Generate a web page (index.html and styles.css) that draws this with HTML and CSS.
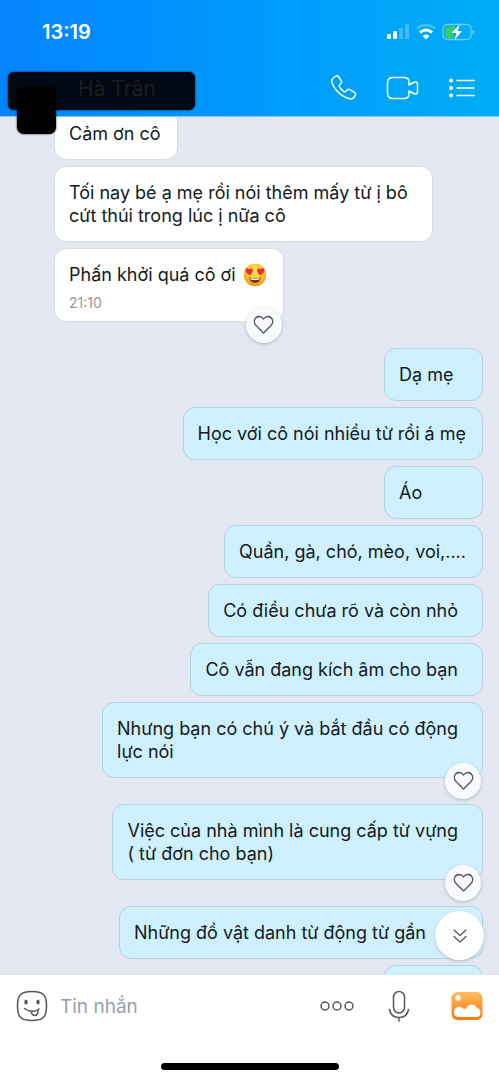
FILE: index.html
```html
<!DOCTYPE html>
<html lang="vi">
<head>
<meta charset="utf-8">
<meta name="viewport" content="width=device-width, initial-scale=1">
<title>Hà Trân</title>
<link rel="stylesheet" href="styles.css">
</head>
<body>
<div class="app">
  <header class="header">
    <div class="status">
      <span class="clock">13:19</span>
      <div class="indicators">
        <svg width="24" height="16" viewBox="0 0 24 16" fill="#fff"><rect x="1" y="10" width="4" height="5" rx="1"/><rect x="7" y="7" width="4" height="8" rx="1"/><g opacity=".25"><rect x="13" y="4" width="4" height="11" rx="1"/><rect x="19" width="4" height="15" rx="1"/></g></svg>
        <svg width="20" height="16" viewBox="0 0 20 16" fill="none"><path d="M1 4.500Q10-2.500 19 4.500" stroke="#fff" stroke-width="3" opacity=".25"/><path d="M4 8.500Q10 3.500 16 8.500" stroke="#fff" stroke-width="3"/><path d="M6.500 12Q10 9 13.500 12L10 15.500Z" fill="#fff"/></svg>
        <svg class="battery" width="33" height="18" viewBox="0 0 33 18"><rect x="1" y="1.500" width="28" height="15" rx="4" fill="none" stroke="#fff" stroke-opacity=".4" stroke-width="1.300"/><path d="M30.500 6.500q2 .5 2 2.500t-2 2.500z" fill="#fff" opacity=".4"/><path d="M5 3.500h9L9 11h3l-1 4H5q-2 0-2-2V5.500q0-2 2-2Z" fill="#32d15c"/><path d="M18 1 9.500 10h5L12.500 17 20 8h-4.500Z" fill="#fff"/></svg>
      </div>
    </div>
    <div class="titlebar">
      <h1 class="name">Hà Trân</h1>
      <nav class="actions">
        <button aria-label="Gọi thoại"><svg width="28" height="28" viewBox="0 0 28 28"><path d="M3.200 4 6 2q1.500-.6 2.500.7l2.800 4q.8 1.300-.2 2.500L9.500 11q-.8 1 0 2.100 1.700 2.600 4.200 4.200 1 .8 2 0l1.600-1.600q1.200-.9 2.500-.1l5 3q1.300 1 .7 2.300l-1.600 2.700q-1.500 1.800-4.200 1.200-8-2-13.500-8.800-3.300-3.900-4.400-8-.4-2.500 1.400-4Z"/></svg></button>
        <button aria-label="Gọi video"><svg width="34" height="26" viewBox="0 0 34 26"><path d="M7 2.500h11q5 0 5 4.500v3l3.500-2Q31.500 5.500 31.500 9v8q0 3.500-5 1L23 16v3q0 4.500-5 4.500H7q-5.500 0-5.500-5v-11q0-5 5.500-5Z"/></svg></button>
        <button aria-label="Tùy chọn"><svg width="27" height="22" viewBox="0 0 27 22"><path d="M9 3.500h17M9 11h17M9 18.500h17"/><g fill="#fff" stroke="none"><circle cx="3" cy="3.500" r="2"/><circle cx="3" cy="11" r="2"/><circle cx="3" cy="18.500" r="2"/></g></svg></button>
      </nav>
    </div>
    <div class="cover cover-name"></div>
    <div class="cover cover-avatar"></div>
  </header>

  <main class="chat">
    <div class="messages">
      <div class="bubble in">Cảm ơn cô</div>
      <div class="bubble in roomy">Tối nay bé ạ mẹ rồi nói thêm mấy từ ị bô<br>cứt thúi trong lúc ị nữa cô</div>
      <div class="bubble in liked">Phấn khởi quá cô ơi
        <svg class="emoji" role="img" aria-label="Mắt trái tim" width="24" height="24" viewBox="0 0 24 24"><defs><radialGradient id="face" cx=".5" cy=".35" r=".65"><stop offset="0" stop-color="#ffe64a"/><stop offset=".65" stop-color="#fdc12c"/><stop offset="1" stop-color="#ee921b"/></radialGradient></defs><circle cx="12" cy="12" r="11.200" fill="url(#face)"/><g fill="#ee2d3a"><path d="M7.200 12.300C4.500 11 2 9 2.500 6.700c.5-2 3-1.800 3.700-.2 1.200-1.500 3.700-1.200 3.700 1 0 1.800-1.500 3.500-2.700 4.800Z"/><path d="M16.800 12.300c2.700-1.300 5.200-3.300 4.700-5.600-.5-2-3-1.800-3.700-.2-1.200-1.500-3.700-1.200-3.700 1 0 1.800 1.500 3.500 2.700 4.800Z"/></g><path d="M6 14.300q6 2 12 0-1 5.700-6 5.700t-6-5.700Z" fill="#713716"/><path d="M7 15q5 1.500 10 0l-.7 1.500q-4.300 1-8.600 0Z" fill="#fff"/></svg>
        <time>21:10</time>
        <button class="like" aria-label="Thích"><svg width="21" height="20" viewBox="0 0 21 20"><path d="M10.500 18 3 10.500C-.5 6.500 2 1.500 6 1.500q3 0 4.500 2.500Q12 1.500 15 1.500c4 0 6.500 5 3 9Z"/></svg></button>
      </div>
      <div class="bubble out">Dạ mẹ</div>
      <div class="bubble out">Học với cô nói nhiều từ rồi á mẹ</div>
      <div class="bubble out">Áo</div>
      <div class="bubble out">Quần, gà, chó, mèo, voi,....</div>
      <div class="bubble out roomy">Có điều chưa rõ và còn nhỏ</div>
      <div class="bubble out roomy">Cô vẫn đang kích âm cho bạn</div>
      <div class="bubble out roomy liked">Nhưng bạn có chú ý và bắt đầu có động<br>lực nói
        <button class="like" aria-label="Thích"><svg width="21" height="20" viewBox="0 0 21 20"><path d="M10.500 18 3 10.500C-.5 6.500 2 1.500 6 1.500q3 0 4.500 2.500Q12 1.500 15 1.500c4 0 6.500 5 3 9Z"/></svg></button>
      </div>
      <div class="bubble out roomy liked">Việc của nhà mình là cung cấp từ vựng<br>( từ đơn cho bạn)
        <button class="like" aria-label="Thích"><svg width="21" height="20" viewBox="0 0 21 20"><path d="M10.500 18 3 10.500C-.5 6.500 2 1.500 6 1.500q3 0 4.500 2.500Q12 1.500 15 1.500c4 0 6.500 5 3 9Z"/></svg></button>
      </div>
      <div class="bubble out wide">Những đồ vật danh từ động từ gần</div>
      <div class="bubble out"></div>
    </div>
    <button class="jump" aria-label="Xuống cuối"><svg width="16" height="16" viewBox="0 0 16 16"><path d="m2 2 6 5.500L14 2M2 8.500 8 14l6-5.500"/></svg></button>
  </main>

  <footer class="footer">
    <form class="composer">
      <button type="button" aria-label="Nhãn dán"><svg width="32" height="32" viewBox="0 0 32 32"><path d="M16 1.500c11 0 14.500 3 14.500 14.500S27 30.500 16 30.500 1.500 27.500 1.500 16 5 1.500 16 1.500Z"/><path d="M8.500 18.500q7 5.500 14.500.5M15.500 21.500q0 4 3.500 4 3.500-.2 3-6"/><g fill="#55585b" stroke="none"><ellipse cx="10" cy="12" rx="1.700" ry="2.600"/><ellipse cx="22" cy="12" rx="1.700" ry="2.600"/></g></svg></button>
      <input class="text" type="text" placeholder="Tin nhắn" aria-label="Tin nhắn">
      <button type="button" aria-label="Thêm"><svg width="36" height="12" viewBox="0 0 36 12"><circle cx="6" cy="6" r="4"/><circle cx="18" cy="6" r="4"/><circle cx="30" cy="6" r="4"/></svg></button>
      <button type="button" class="mic" aria-label="Ghi âm"><svg width="22" height="32" viewBox="0 0 22 32"><rect x="5.500" y="1.500" width="11" height="21.500" rx="5.500"/><path d="M1.500 19.500q1.500 8 9.500 8t9.500-8M11 27.500V31"/></svg></button>
      <button type="button" aria-label="Ảnh"><svg width="32" height="30" viewBox="0 0 32 30"><defs><linearGradient id="photo" x2="0" y2="1"><stop stop-color="#ffbd5f"/><stop offset="1" stop-color="#ff7414"/></linearGradient></defs><rect x=".5" y="1" width="31" height="28" rx="6" fill="url(#photo)" stroke="none"/><circle cx="7" cy="7" r="2.700" fill="#fff" stroke="none"/><path d="M3 22c0-4 3-7 6.500-6 2 .7 2.500 2 4 2 2.500 0 2.500-4.300 7.500-4.300 3.500 0 4.500 2.800 5.500 3.300 1.500.7 3 1.700 3 4.500 0 3-1.500 4.500-4 4.500H7c-2.500 0-4-1.500-4-4Z" fill="#fff" stroke="none"/></svg></button>
    </form>
    <div class="home"></div>
  </footer>
</div>
</body>
</html>
```
FILE: styles.css
```css
* { box-sizing: border-box; }

body {
  margin: 0;
  font-family: Inter, "Noto Sans", sans-serif;
  color: #111b20;
}

button {
  display: flex;
  padding: 0;
  border: 0;
  background: none;
}

svg { display: block; flex: none; }

.app {
  display: flex;
  flex-direction: column;
  height: 100vh;
  overflow: hidden;
}

/* Header */
.header {
  position: relative;
  z-index: 2;
  flex: none;
  padding: 20px 24px 8px 42px;
  border-bottom: 1px solid #86cbf6;
  background: linear-gradient(90deg, #0583ff, #0099fb 50%, #00adf5);
}

.status {
  display: flex;
  justify-content: space-between;
  align-items: center;
  height: 24px;
  color: #fff;
}

.clock { font-size: 20px; font-weight: 600; }

.indicators { display: flex; align-items: center; gap: 6px; }

.titlebar {
  display: flex;
  justify-content: space-between;
  align-items: center;
  height: 40px;
  margin-top: 24px;
  padding-left: 36px;
}

.name {
  position: relative;
  z-index: 1;
  margin: 0;
  font-size: 21px;
  font-weight: 400;
  color: #1d1c1e;
}

.actions { display: flex; align-items: center; gap: 28px; }

.actions svg {
  fill: none;
  stroke: #fff;
  stroke-width: 1.5;
  stroke-linecap: round;
  stroke-linejoin: round;
}

.cover { position: absolute; background: #00070e; }

.cover-name {
  top: 72px;
  left: 8px;
  width: 187px;
  height: 38px;
  border-radius: 6px;
  background: #010a14;
  box-shadow: 0 0 2px #010a14;
}

.cover-avatar {
  top: 87px;
  left: 17px;
  width: 39px;
  height: 47px;
  border-radius: 7px;
  background: #000;
  box-shadow: 0 0 2px #000;
}

/* Conversation */
.chat {
  position: relative;
  flex: 1;
  min-height: 0;
  overflow: hidden;
  background: #e2e7f1;
}

.messages {
  display: flex;
  flex-direction: column;
  gap: 6px;
  margin-top: -10px;
  padding: 0 16px 0 54px;
}

.bubble {
  position: relative;
  flex: none;
  min-height: 53px;
  padding: 14px 16px 14px 14px;
  border: 1px solid #d6dbe2;
  border-radius: 12px;
  font-size: 18px;
  line-height: 23px;
}

.in { align-self: flex-start; background: #fff; }

.out {
  align-self: flex-end;
  min-width: 99px;
  border-color: #b4d0dc;
  background: #cff0ff;
}

.roomy { padding-right: 24px; }
.wide { padding-right: 56px; }
.liked { margin-bottom: 20px; }

.emoji { display: inline-block; margin: -2px 0 0 2px; vertical-align: middle; }

.bubble time {
  display: block;
  margin: 8px 0 -4px;
  font-size: 14px;
  line-height: 16px;
  color: #93979b;
}

.like,
.jump {
  position: absolute;
  align-items: center;
  justify-content: center;
  border-radius: 50%;
  background: #f8fafd;
  box-shadow: 0 1px 3px #7d8a9a80;
}

.like { right: 1px; bottom: -22px; width: 36px; height: 36px; }

.like svg,
.jump svg {
  fill: none;
  stroke: #55595d;
  stroke-width: 1.3;
  stroke-linecap: round;
  stroke-linejoin: round;
}

.jump {
  right: 15px;
  bottom: 15px;
  width: 49px;
  height: 49px;
  background: #fff;
}

/* Composer */
.footer { flex: none; padding: 14px 16px 10px; background: #fff; }

.composer { display: flex; align-items: center; height: 34px; }

.composer svg {
  fill: none;
  stroke: #55585b;
  stroke-width: 1.5;
  stroke-linecap: round;
}

.text {
  flex: 1;
  min-width: 0;
  padding: 2px 12px 0;
  border: 0;
  outline: 0;
  font: 19px/24px Inter, "Noto Sans", sans-serif;
}

.text::placeholder { color: #9b9fa6; opacity: 1; }

.mic { margin: 0 41px 0 33px; }

.home {
  width: 178px;
  height: 7px;
  margin: 40px auto 0;
  border-radius: 4px;
  background: #000;
}
```
